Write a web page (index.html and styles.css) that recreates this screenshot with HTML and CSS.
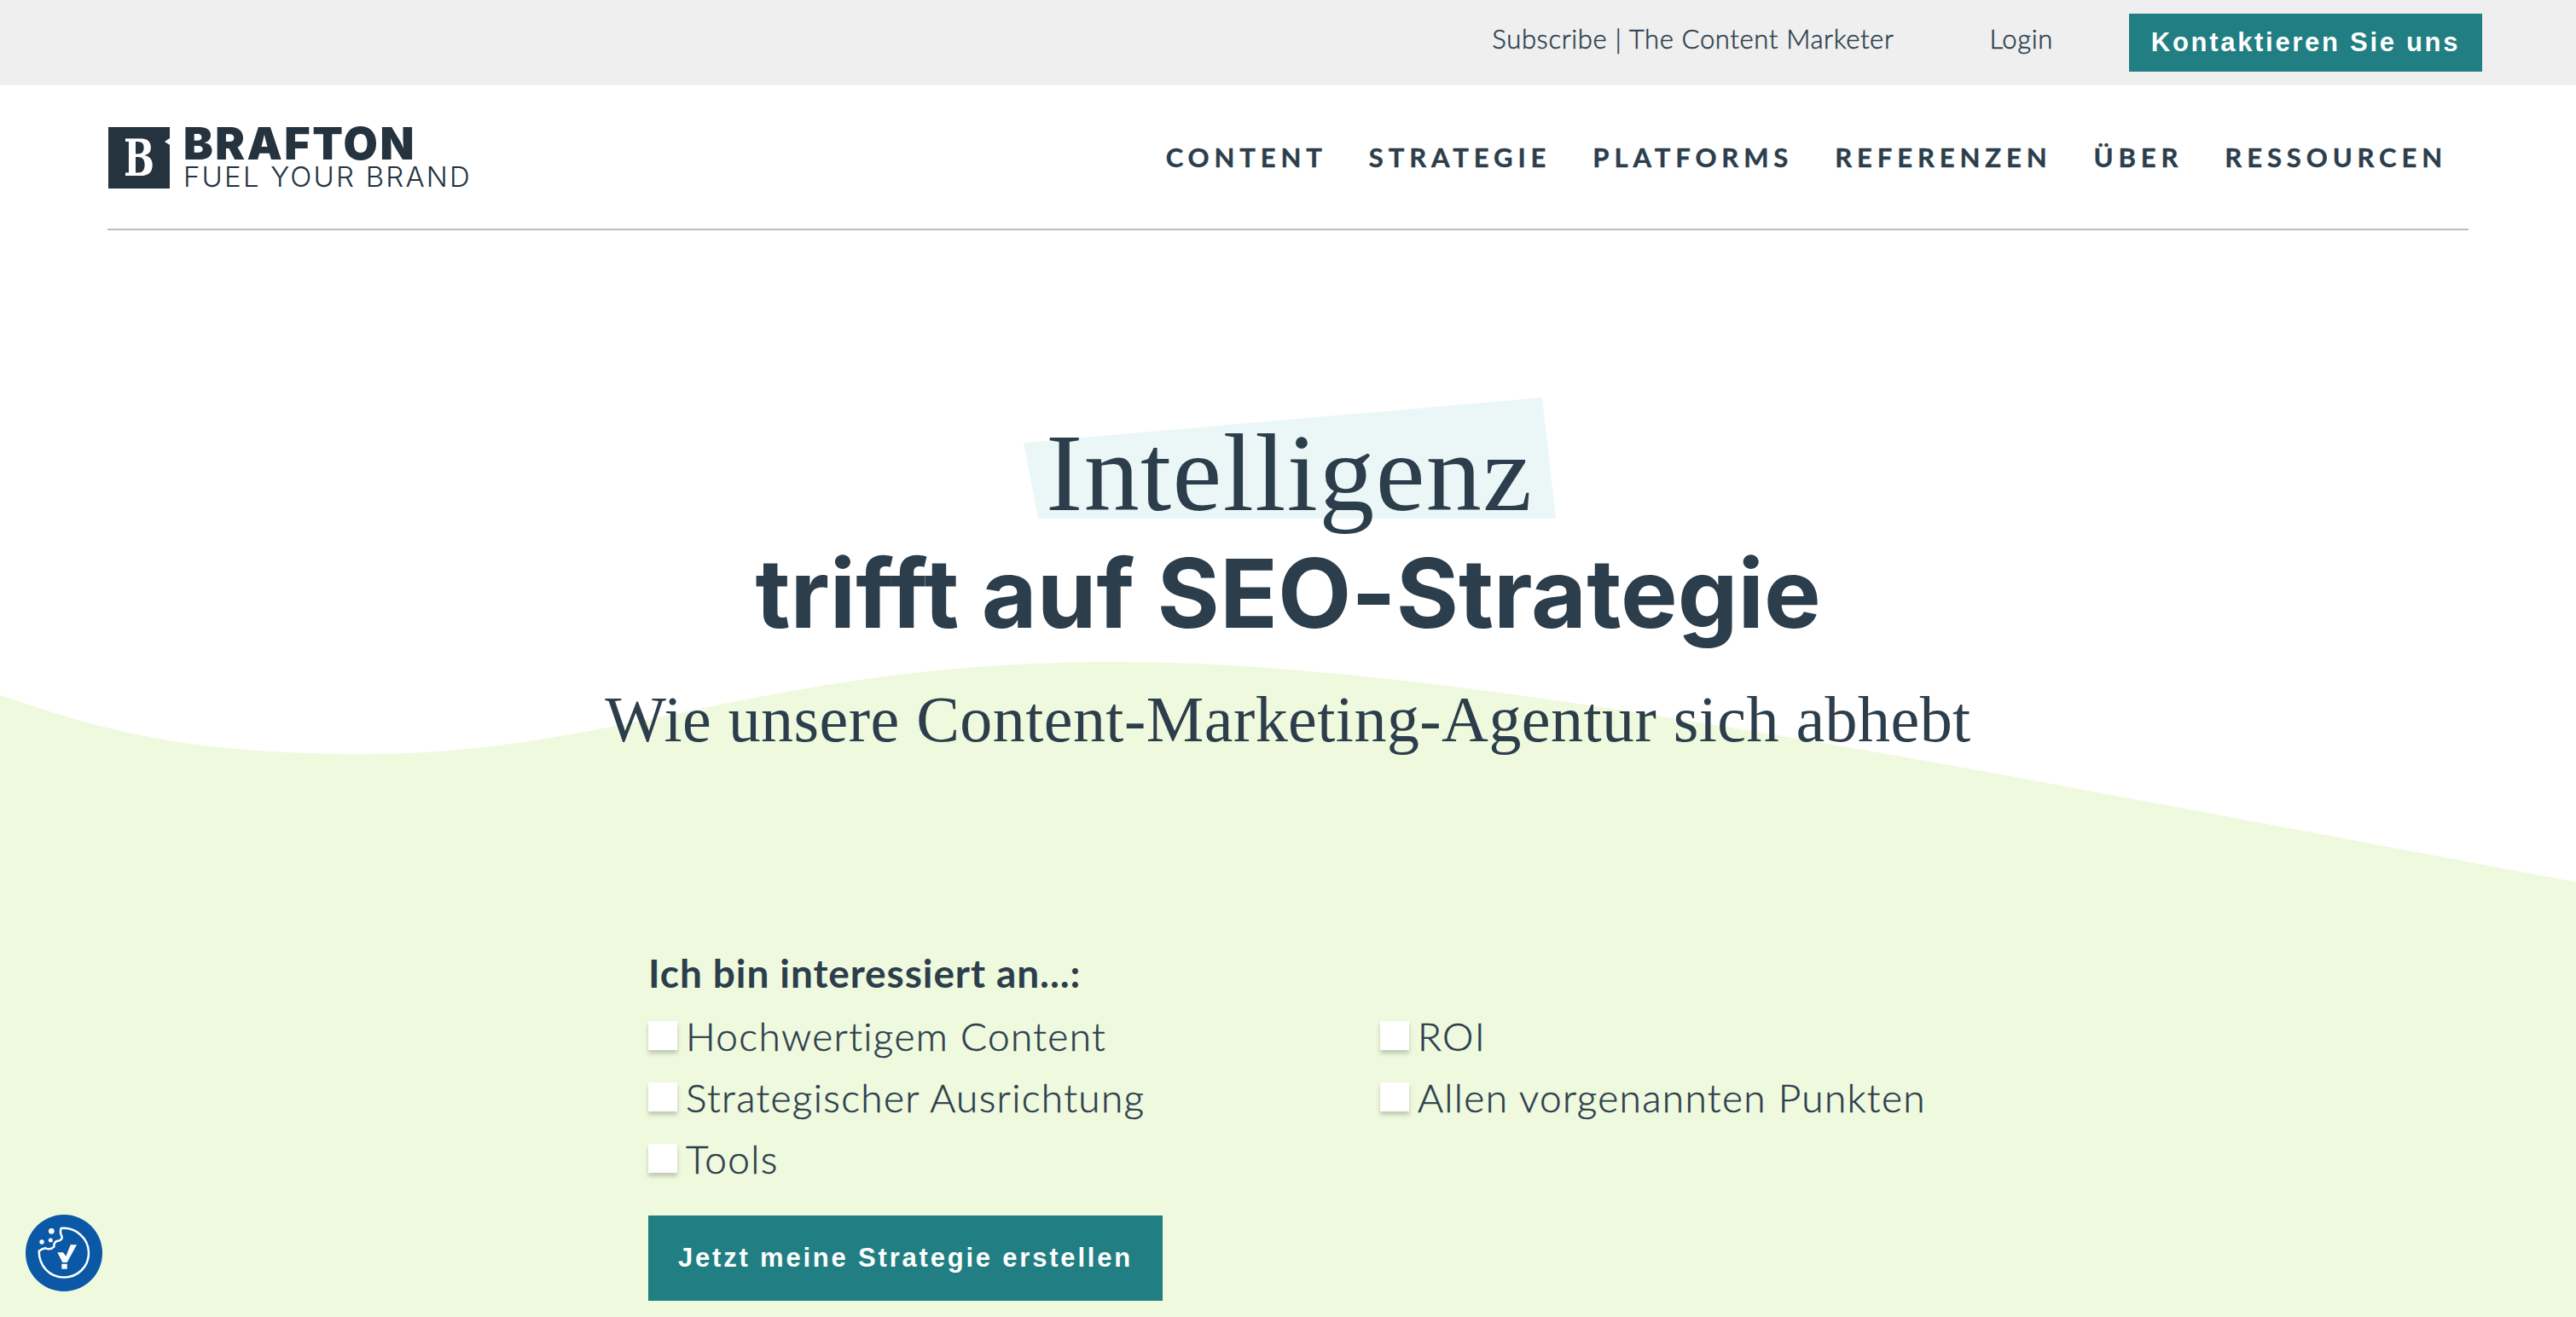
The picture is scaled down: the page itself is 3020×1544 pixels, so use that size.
FILE: index.html
```html
<!DOCTYPE html>
<html lang="de">
<head>
    <meta charset="UTF-8">
    <title>Brafton</title>
    <link rel="stylesheet" href="styles.css">
</head>
<body>
    <svg class="wave" viewBox="0 0 3020 1544" preserveAspectRatio="none" aria-hidden="true">
        <path d="M0 815C120 855 210 884 430 884C720 884 900 776 1310 776C1700 776 2300 900 3020 1034L3020 1544L0 1544Z"/>
    </svg>

    <div class="topbar">
        <a class="topbar-link subscribe">Subscribe | The Content Marketer</a>
        <a class="topbar-link login">Login</a>
        <a class="contact-btn">Kontaktieren Sie uns</a>
    </div>

    <header class="header">
        <div class="logo">
            <svg class="logo-mark" viewBox="0 0 72 72" aria-hidden="true">
                <path d="M0 0H72V13L66 17L72 21V72H0Z"/>
                <text x="18" y="57" textLength="36" lengthAdjust="spacingAndGlyphs">B</text>
            </svg>
            <div class="logo-text">
                <div class="logo-name">BRAFTON</div>
                <div class="logo-slogan">FUEL YOUR BRAND</div>
            </div>
        </div>
        <nav class="nav">
            <a>CONTENT</a>
            <a>STRATEGIE</a>
            <a>PLATFORMS</a>
            <a>REFERENZEN</a>
            <a>ÜBER</a>
            <a>RESSOURCEN</a>
        </nav>
    </header>

    <main class="main">
        <h1 class="title">
            <span class="highlight">Intelligenz</span>
            <strong>trifft auf SEO-Strategie</strong>
        </h1>
        <h2 class="subtitle">Wie unsere Content-Marketing-Agentur sich abhebt</h2>

        <form class="form">
            <div class="form-label">Ich bin interessiert an...:</div>
            <div class="options">
                <label class="option"><span class="box"></span>Hochwertigem Content</label>
                <label class="option"><span class="box"></span>Strategischer Ausrichtung</label>
                <label class="option"><span class="box"></span>Tools</label>
                <label class="option"><span class="box"></span>ROI</label>
                <label class="option"><span class="box"></span>Allen vorgenannten Punkten</label>
            </div>
            <div class="submit">Jetzt meine Strategie erstellen</div>
        </form>
    </main>

    <div class="cookie">
        <svg viewBox="0 0 90 90" aria-hidden="true">
            <path class="cookie-ring" d="M41.7 16C58 14.500 74 27 74 45C74 61 61 73.500 45 73.500C28 73.500 15.700 60 15.700 42.700C18 41 21 39.500 23.300 39.300C27 41 31 40 33.300 37.700C33 34 34.500 32 36.700 31C40 31 43 29 42.700 26C41 23 40.500 19 41.700 16Z"/>
            <circle cx="30.300" cy="19.300" r="3.400"/>
            <circle cx="29.300" cy="30" r="2.500"/>
            <circle cx="19" cy="32" r="2.700"/>
            <path d="M37.300 44.300H44L47.300 48.700L52.700 35.300H60L48.700 56H43.300Z"/>
            <rect x="42.300" y="57.700" width="6.400" height="6"/>
        </svg>
    </div>
</body>
</html>
```

FILE: styles.css
```css
html, body {
    margin: 0;
    height: 100%;
}
body {
    position: relative;
    height: 1544px;
    overflow: hidden;
    background: #fff;
    color: #2c3e4c;
    font-family: Lato, "Open Sans", sans-serif;
    font-variant-ligatures: none;
}
.wave {
    position: absolute;
    top: 0;
    left: 0;
    width: 100%;
    height: 100%;
    z-index: 0;
}
.wave path {
    fill: #eff9de;
}

/* top bar */
.topbar {
    position: relative;
    display: flex;
    align-items: flex-start;
    height: 100px;
    padding-right: 110px;
    justify-content: flex-end;
    background: #efefef;
}
.topbar-link {
    font-size: 31px;
    line-height: 46px;
    margin-top: 22px;
    font-weight: 300;
    letter-spacing: 0.650px;
    -webkit-text-stroke: 0.500px #2c3e4c;
}
.subscribe {
    margin-right: 112px;
}
.login {
    margin-right: 89px;
}
.contact-btn {
    margin-top: 16px;
    width: 414px;
    height: 68px;
    line-height: 68px;
    text-align: center;
    background: #217e82;
    color: #fff;
    font-family: "Liberation Sans", Arial, sans-serif;
    font-size: 31px;
    font-weight: 700;
    letter-spacing: 2.700px;
}

/* header */
.header {
    position: relative;
    display: flex;
    justify-content: space-between;
    align-items: flex-start;
    height: 168px;
    margin: 0 126px;
    border-bottom: 2px solid #b9bec1;
}
.logo {
    display: flex;
    gap: 16px;
    margin: 49px 0 0 1px;
}
.logo-mark {
    width: 72px;
    height: 72px;
}
.logo-mark path {
    fill: #25333f;
}
.logo-mark text {
    fill: #fff;
    font-family: "DejaVu Serif", serif;
    font-weight: 700;
    font-size: 60px;
}
.logo-text {
    color: #25333f;
    font-family: Inter, sans-serif;
}
.logo-name {
    font-size: 52px;
    line-height: 40px;
    font-weight: 900;
    letter-spacing: 2.500px;
}
.logo-slogan {
    font-size: 33px;
    line-height: 36px;
    font-weight: 300;
    letter-spacing: 2.200px;
}
.nav {
    display: flex;
    gap: 49px;
    margin-top: 64px;
    padding-right: 25px;
}
.nav a {
    font-size: 31px;
    line-height: 40px;
    font-weight: 700;
    letter-spacing: 5.900px;
    -webkit-text-stroke: 0.400px #2c3e4c;
}

/* hero */
.main {
    position: relative;
}
.title {
    margin: 0;
    padding-top: 216px;
    text-align: center;
    font-weight: 400;
}
.highlight {
    position: relative;
    display: block;
    width: 568px;
    margin: 0 auto;
    font-family: "Liberation Serif", serif;
    font-size: 130px;
    line-height: 137px;
    letter-spacing: 1.400px;
    z-index: 1;
}
.highlight::before {
    content: "";
    position: absolute;
    top: -20px;
    left: -26px;
    width: 624px;
    height: 142px;
    background: #ebf7f7;
    clip-path: polygon(0 53px, 608px 0, 624px 142px, 17px 142px);
    z-index: -1;
}
.title strong {
    display: block;
    font-family: Inter, sans-serif;
    font-size: 112px;
    line-height: 145px;
    font-weight: 700;
}
.subtitle {
    margin: 0;
    padding-top: 25px;
    text-align: center;
    font-family: "Liberation Serif", serif;
    font-size: 76px;
    line-height: 100px;
    letter-spacing: 0.450px;
    font-weight: 400;
}

/* form */
.form {
    margin: 0 0 0 760px;
    padding-top: 218px;
}
.form-label {
    font-size: 46px;
    line-height: 60px;
    font-weight: 700;
    letter-spacing: 0.900px;
}
.options {
    display: grid;
    grid-auto-flow: column;
    grid-template-rows: repeat(3, 72px);
    grid-template-columns: 858px auto;
    margin-top: 16px;
}
.option {
    display: flex;
    gap: 10px;
    font-size: 46px;
    line-height: 56px;
    font-weight: 300;
    letter-spacing: 1.350px;
    -webkit-text-stroke: 0.500px #2c3e4c;
}
.box {
    width: 34px;
    height: 34px;
    margin-top: 10px;
    background: #fff;
    box-shadow: 0 4px 5px rgba(0, 0, 0, 0.2);
}
.submit {
    width: 603px;
    height: 100px;
    margin-top: 22px;
    line-height: 100px;
    text-align: center;
    background: #217e82;
    color: #fff;
    font-family: "Liberation Sans", Arial, sans-serif;
    font-size: 31px;
    font-weight: 700;
    letter-spacing: 2.800px;
}

/* cookie button */
.cookie {
    position: fixed;
    left: 30px;
    bottom: 30px;
    width: 90px;
    height: 90px;
    border-radius: 50%;
    background: #0a58a6;
}
.cookie svg {
    display: block;
    fill: #fff;
}
.cookie-ring {
    fill: none;
    stroke: #fff;
    stroke-width: 2.500;
}
```
